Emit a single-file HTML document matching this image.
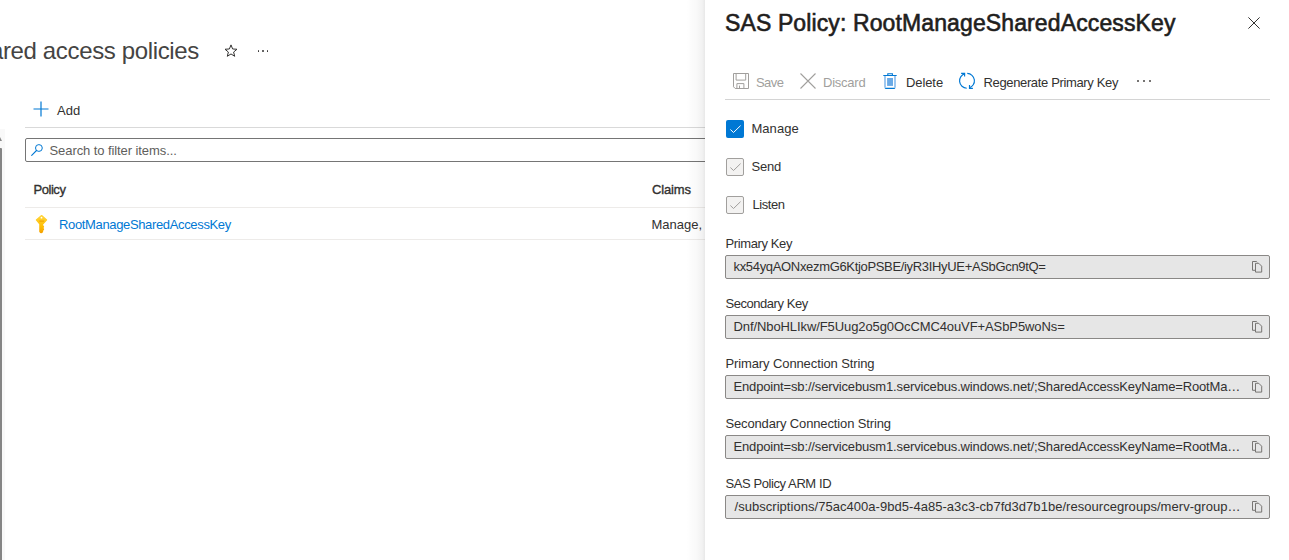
<!DOCTYPE html>
<html><head><meta charset="utf-8">
<style>
*{box-sizing:border-box;margin:0;padding:0}
html,body{width:1289px;height:560px;overflow:hidden;background:#fff}
body{position:relative;font-family:"Liberation Sans",sans-serif;color:#323130}
.t{position:absolute;white-space:nowrap;line-height:1}
.ln{position:absolute;height:1px}
svg{position:absolute;overflow:visible}
.dot{position:absolute;width:2px;height:2px;border-radius:1px}
</style></head><body>

<div style="position:absolute;left:0;top:129px;width:5px;height:431px;background:#f9f9f9"></div>
<div style="position:absolute;left:0;top:136.5px;width:0;height:0;border-right:2.2px solid transparent;border-bottom:4.5px solid #8a8a8a"></div>
<div style="position:absolute;left:0;top:147.5px;width:2.2px;height:413px;background:#858585;border-top-right-radius:1px"></div>
<div class="t" id="pgtitle" style="right:1090.00px;top:38.70px;font-size:24px;color:#454443;letter-spacing:-0.350px;">Shared access policies</div>
<svg style="left:218px;top:38px" width="26" height="26" viewBox="0 0 26 26"><path d="M13.00 6.90 L14.62 10.98 L18.99 11.25 L15.62 14.05 L16.70 18.30 L13.00 15.95 L9.30 18.30 L10.38 14.05 L7.01 11.25 L11.38 10.98 Z" fill="none" stroke="#323130" stroke-width="1" stroke-linejoin="miter"/></svg>
<div class="dot" style="left:257.8px;top:50px;width:1.5px;background:#323130"></div>
<div class="dot" style="left:262.2px;top:50px;width:1.5px;background:#323130"></div>
<div class="dot" style="left:266.7px;top:50px;width:1.5px;background:#323130"></div>
<svg style="left:33px;top:101px" width="16" height="16" viewBox="0 0 16 16"><path d="M8 0.5 V15.5 M0.5 8 H15.5" stroke="#0078d4" stroke-width="1.2"/></svg>
<div class="t" id="add" style="left:57.00px;top:104.00px;font-size:13px;color:#323130;letter-spacing:0.000px;">Add</div>
<div class="ln" style="left:25px;top:127px;width:680px;background:#d9d9d9"></div>
<div style="position:absolute;left:25px;top:138px;width:700px;height:24px;border:1px solid #757575;border-radius:2px"></div>
<svg style="left:31px;top:144px" width="13" height="13" viewBox="0 0 13 13"><circle cx="7.9" cy="4" r="3.4" fill="none" stroke="#0078d4" stroke-width="1"/><path d="M5.5 6.5 L0.7 11.3" stroke="#0078d4" stroke-width="1.1" stroke-linecap="round"/></svg>
<div class="t" id="search" style="left:49.50px;top:143.80px;font-size:13px;color:#605e5c;letter-spacing:-0.083px;">Search to filter items...</div>
<div class="t" id="policy" style="left:33.46px;top:182.50px;font-size:13px;color:#323130;letter-spacing:-0.440px;-webkit-text-stroke:0.35px #323130;">Policy</div>
<div class="t" id="claims" style="left:651.97px;top:182.50px;font-size:13px;color:#323130;letter-spacing:-0.160px;-webkit-text-stroke:0.35px #323130;">Claims</div>
<div class="ln" style="left:25px;top:207px;width:680px;background:#edebe9"></div>
<svg style="left:35px;top:214px" width="13" height="20" viewBox="0 0 13 20"><defs><linearGradient id="kg" x1="0" y1="0" x2="0" y2="1"><stop offset="0" stop-color="#ffd43b"/><stop offset="0.6" stop-color="#ffc107"/><stop offset="1" stop-color="#f5a200"/></linearGradient></defs><path d="M6.6 1.6 L11.6 5.9 L7.5 10.2 V11.6 L8.5 12.4 L7.5 13.2 L8.5 14 L7.5 14.8 L8.5 15.6 L7.5 16.4 V17.6 Q6.2 19.4 4.9 17.6 V10.2 L1.4 5.9 Z" fill="url(#kg)" stroke="url(#kg)" stroke-width="1.3" stroke-linejoin="round"/><circle cx="6.5" cy="3.7" r="0.9" fill="#fff"/><rect x="4.3" y="6.5" width="4.8" height="1.3" fill="#f0a000" opacity="0.8"/></svg>
<div class="t" id="rootkey" style="left:58.98px;top:218.20px;font-size:13px;color:#0078d4;letter-spacing:-0.350px;">RootManageSharedAccessKey</div>
<div class="t" id="manage2" style="left:651.50px;top:218.20px;font-size:13px;color:#323130;letter-spacing:0.000px;">Manage,</div>
<div class="ln" style="left:25px;top:239px;width:680px;background:#edebe9"></div>
<div style="position:absolute;left:686px;top:0;width:19px;height:560px;background:linear-gradient(to right,rgba(0,0,0,0),rgba(0,0,0,0.025) 55%,rgba(0,0,0,0.05) 85%,rgba(0,0,0,0.09))"></div>
<div style="position:absolute;left:705px;top:0;width:584px;height:560px;background:#fff"></div>
<div class="t" id="ptitle" style="left:725.00px;top:11.80px;font-size:23px;color:#1f1e1d;letter-spacing:0.117px;-webkit-text-stroke:0.6px #1f1e1d;">SAS Policy: RootManageSharedAccessKey</div>
<svg style="left:1248px;top:17px" width="12" height="12" viewBox="0 0 12 12"><path d="M0.4 0.4 L11.6 11.6 M11.6 0.4 L0.4 11.6" stroke="#323130" stroke-width="1"/></svg>
<svg style="left:733px;top:73px" width="16" height="16" viewBox="0 0 16 16"><path d="M0.5 0.5 H15.5 V15.5 H2.2 L0.5 13.8 Z M3.1 0.5 V7.1 H12.7 V0.5 M3.9 15.5 V10.6 H10.9 V15.5 M6.5 12.6 V15.5" fill="none" stroke="#a19f9d" stroke-width="1"/></svg>
<div class="t" id="save" style="left:755.97px;top:75.90px;font-size:13px;color:#a19f9d;letter-spacing:-0.533px;">Save</div>
<svg style="left:800px;top:73px" width="16" height="16" viewBox="0 0 16 16"><path d="M0.5 0.5 L15.5 15.5 M15.5 0.5 L0.5 15.5" stroke="#a19f9d" stroke-width="1.1"/></svg>
<div class="t" id="discard" style="left:823.00px;top:75.90px;font-size:13px;color:#a19f9d;letter-spacing:-0.233px;">Discard</div>
<svg style="left:883px;top:73px" width="14" height="16" viewBox="0 0 14 16"><path d="M2 2.5 V14.8" stroke="#4f9be3" stroke-width="1.1"/><path d="M12 2.5 V14.8" stroke="#4f9be3" stroke-width="1.1"/><path d="M0.3 2.5 H13.7 M4.8 2.5 V0.8 H9.4 V2.5 M2.1 15 Q2.3 15.4 3 15.4 H11 Q11.7 15.4 11.9 15" fill="none" stroke="#0078d4" stroke-width="1.1"/><rect x="4.1" y="5" width="5.9" height="7.9" fill="#6aaae6"/></svg>
<div class="t" id="delete" style="left:905.96px;top:75.90px;font-size:13px;color:#323130;letter-spacing:-0.080px;">Delete</div>
<svg style="left:955px;top:70px" width="25" height="22" viewBox="0 0 25 22"><path d="M10.08 3.65 A7.4 7.4 0 0 0 11.74 18.2 M12.26 3.4 A7.4 7.4 0 0 1 14.2 17.87" fill="none" stroke="#0078d4" stroke-width="1.15"/><path d="M6.1 3.3 H9.6 V6.5 M14.5 15 V18.3 H17.9" fill="none" stroke="#0078d4" stroke-width="1.15"/></svg>
<div class="t" id="regen" style="left:983.48px;top:75.90px;font-size:13px;color:#323130;letter-spacing:-0.352px;">Regenerate Primary Key</div>
<div class="dot" style="left:1137px;top:80px;background:#484644"></div>
<div class="dot" style="left:1143px;top:80px;background:#484644"></div>
<div class="dot" style="left:1149px;top:80px;background:#484644"></div>
<div class="ln" style="left:725px;top:99px;width:545px;background:#d4d4d4"></div>
<div style="position:absolute;left:726px;top:120px;width:18px;height:18px;background:#0078d4;border-radius:2px"></div>
<svg style="left:726px;top:120px" width="18" height="18" viewBox="0 0 18 18"><path d="M4.4 9.5 L7.5 12.5 L14.6 5.6" fill="none" stroke="#fff" stroke-width="1"/></svg>
<div class="t" id="cb1" style="left:751.48px;top:122.20px;font-size:13px;color:#323130;letter-spacing:0.040px;">Manage</div>
<div style="position:absolute;left:726px;top:158px;width:18px;height:18px;background:#f3f2f1;border:1px solid #a19f9d;border-radius:2px"></div>
<svg style="left:726px;top:158px" width="18" height="18" viewBox="0 0 18 18"><path d="M4.4 9.5 L7.5 12.5 L14.6 5.6" fill="none" stroke="#a19f9d" stroke-width="1"/></svg>
<div class="t" id="cb2" style="left:751.48px;top:160.20px;font-size:13px;color:#323130;letter-spacing:-0.200px;">Send</div>
<div style="position:absolute;left:726px;top:196px;width:18px;height:18px;background:#f3f2f1;border:1px solid #a19f9d;border-radius:2px"></div>
<svg style="left:726px;top:196px" width="18" height="18" viewBox="0 0 18 18"><path d="M4.4 9.5 L7.5 12.5 L14.6 5.6" fill="none" stroke="#a19f9d" stroke-width="1"/></svg>
<div class="t" id="cb3" style="left:752.46px;top:198.20px;font-size:13px;color:#323130;letter-spacing:-0.440px;">Listen</div>
<div class="t" id="l1" style="left:725.46px;top:236.70px;font-size:13px;color:#323130;letter-spacing:-0.380px;">Primary Key</div>
<div style="position:absolute;left:725px;top:255px;width:545px;height:24px;background:#e6e6e6;border:1px solid #8a8886;border-radius:2px"></div>
<div class="t" id="v1" style="left:733.50px;top:260.20px;font-size:13px;color:#323130;letter-spacing:-0.330px;">kx54yqAONxezmG6KtjoPSBE/iyR3IHyUE+ASbGcn9tQ=</div>
<svg style="left:1252px;top:261px" width="12" height="13" viewBox="0 0 12 13"><path d="M3 9.3 H0.5 V0.5 H4.6 L5.3 1.2" fill="none" stroke="#6b6967" stroke-width="0.9"/><path d="M3.5 2.3 H6.8 L9.7 5.2 V11.1 H3.5 Z" fill="#e6e6e6" stroke="#6b6967" stroke-width="0.9"/></svg>
<div class="t" id="l2" style="left:725.46px;top:296.70px;font-size:13px;color:#323130;letter-spacing:-0.450px;">Secondary Key</div>
<div style="position:absolute;left:725px;top:315px;width:545px;height:24px;background:#e6e6e6;border:1px solid #8a8886;border-radius:2px"></div>
<div class="t" id="v2" style="left:733.50px;top:320.20px;font-size:13px;color:#323130;letter-spacing:-0.093px;">Dnf/NboHLIkw/F5Uug2o5g0OcCMC4ouVF+ASbP5woNs=</div>
<svg style="left:1252px;top:321px" width="12" height="13" viewBox="0 0 12 13"><path d="M3 9.3 H0.5 V0.5 H4.6 L5.3 1.2" fill="none" stroke="#6b6967" stroke-width="0.9"/><path d="M3.5 2.3 H6.8 L9.7 5.2 V11.1 H3.5 Z" fill="#e6e6e6" stroke="#6b6967" stroke-width="0.9"/></svg>
<div class="t" id="l3" style="left:725.46px;top:356.70px;font-size:13px;color:#323130;letter-spacing:-0.108px;">Primary Connection String</div>
<div style="position:absolute;left:725px;top:375px;width:545px;height:24px;background:#e6e6e6;border:1px solid #8a8886;border-radius:2px"></div>
<div class="t" id="v3" style="left:733.50px;top:380.20px;font-size:13px;color:#323130;letter-spacing:-0.156px;">Endpoint=sb://servicebusm1.servicebus.windows.net/;SharedAccessKeyName=RootMa…</div>
<svg style="left:1252px;top:381px" width="12" height="13" viewBox="0 0 12 13"><path d="M3 9.3 H0.5 V0.5 H4.6 L5.3 1.2" fill="none" stroke="#6b6967" stroke-width="0.9"/><path d="M3.5 2.3 H6.8 L9.7 5.2 V11.1 H3.5 Z" fill="#e6e6e6" stroke="#6b6967" stroke-width="0.9"/></svg>
<div class="t" id="l4" style="left:725.46px;top:416.70px;font-size:13px;color:#323130;letter-spacing:-0.138px;">Secondary Connection String</div>
<div style="position:absolute;left:725px;top:435px;width:545px;height:24px;background:#e6e6e6;border:1px solid #8a8886;border-radius:2px"></div>
<div class="t" id="v4" style="left:733.50px;top:440.20px;font-size:13px;color:#323130;letter-spacing:-0.156px;">Endpoint=sb://servicebusm1.servicebus.windows.net/;SharedAccessKeyName=RootMa…</div>
<svg style="left:1252px;top:441px" width="12" height="13" viewBox="0 0 12 13"><path d="M3 9.3 H0.5 V0.5 H4.6 L5.3 1.2" fill="none" stroke="#6b6967" stroke-width="0.9"/><path d="M3.5 2.3 H6.8 L9.7 5.2 V11.1 H3.5 Z" fill="#e6e6e6" stroke="#6b6967" stroke-width="0.9"/></svg>
<div class="t" id="l5" style="left:725.46px;top:476.70px;font-size:13px;color:#323130;letter-spacing:-0.412px;">SAS Policy ARM ID</div>
<div style="position:absolute;left:725px;top:495px;width:545px;height:24px;background:#e6e6e6;border:1px solid #8a8886;border-radius:2px"></div>
<div class="t" id="v5" style="left:734.50px;top:500.20px;font-size:13px;color:#323130;letter-spacing:0.039px;">/subscriptions/75ac400a-9bd5-4a85-a3c3-cb7fd3d7b1be/resourcegroups/merv-group…</div>
<svg style="left:1252px;top:501px" width="12" height="13" viewBox="0 0 12 13"><path d="M3 9.3 H0.5 V0.5 H4.6 L5.3 1.2" fill="none" stroke="#6b6967" stroke-width="0.9"/><path d="M3.5 2.3 H6.8 L9.7 5.2 V11.1 H3.5 Z" fill="#e6e6e6" stroke="#6b6967" stroke-width="0.9"/></svg>
</body></html>
